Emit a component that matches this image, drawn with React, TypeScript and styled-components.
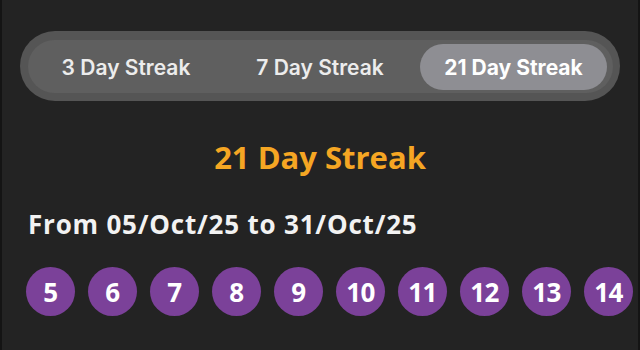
import { useState } from "react";
import styled, { createGlobalStyle } from "styled-components";

const GlobalStyle = createGlobalStyle`
  html, body {
    margin: 0;
    padding: 0;
    background: #232323;
  }
  body {
    font-family: "Open Sans", "Noto Sans", sans-serif;
  }
`;

const streaks = [3, 7, 21];
const days = [5, 6, 7, 8, 9, 10, 11, 12, 13, 14];

const App = () => {
  const [selected, setSelected] = useState(21);

  return (
    <>
      <GlobalStyle />
      <Page>
        <SegmentOuter>
          <SegmentTrack>
            {streaks.map((s) => (
              <Segment key={s} $active={s === selected} onClick={() => setSelected(s)}>
                {s} Day Streak
              </Segment>
            ))}
          </SegmentTrack>
        </SegmentOuter>

        <Title>{selected} Day Streak</Title>
        <Range>From 05/Oct/25 to 31/Oct/25</Range>

        <DayRow>
          {days.map((d) => (
            <DayBubble key={d}>{d}</DayBubble>
          ))}
        </DayRow>
      </Page>
    </>
  );
};

export default App;

const Page = styled.div`
  width: 640px;
  height: 350px;
  box-sizing: border-box;
  overflow: hidden;
  border-left: 2px solid #141414;
  border-right: 2px solid #141414;
  padding-top: 31px;
  display: flex;
  flex-direction: column;
`;

const SegmentOuter = styled.div`
  margin: 0 18px;
  height: 70px;
  box-sizing: border-box;
  padding: 9px 7px 8px 8px;
  border-radius: 35px;
  background: #555555;
`;

const SegmentTrack = styled.div`
  height: 100%;
  box-sizing: border-box;
  padding: 4px 6px 3px 4px;
  border-radius: 27px;
  background: #5f5f5f;
  display: grid;
  grid-template-columns: 188fr 200fr 187fr;
`;

const Segment = styled.button<{ $active: boolean }>`
  border: none;
  margin: 0;
  padding: 0;
  border-radius: 23px;
  cursor: pointer;
  background: ${(p) => (p.$active ? "#8e8e93" : "transparent")};
  color: ${(p) => (p.$active ? "#ffffff" : "#ececec")};
  font-family: "Inter", "Roboto", sans-serif;
  font-weight: ${(p) => (p.$active ? 700 : 600)};
  font-size: 21px;
  letter-spacing: 0;
`;

const Title = styled.h1`
  margin: 36px 0 0;
  text-align: center;
  color: #f5a623;
  font-family: "Open Sans", sans-serif;
  font-weight: 700;
  font-size: 31px;
  line-height: 40px;
`;

const Range = styled.div`
  margin: 31px 0 0 26px;
  color: #f2f2f2;
  font-family: "Open Sans", sans-serif;
  font-weight: 700;
  font-size: 26px;
  line-height: 32px;
  letter-spacing: 0.8px;
`;

const DayRow = styled.div`
  margin: 27px 0 0 24px;
  display: flex;
  gap: 13px;
`;

const DayBubble = styled.div`
  flex: 0 0 auto;
  width: 49px;
  height: 49px;
  border-radius: 50%;
  background: #7b4199;
  color: #ffffff;
  display: flex;
  align-items: center;
  justify-content: center;
  font-family: "Open Sans", sans-serif;
  font-weight: 700;
  font-size: 26px;
  letter-spacing: -0.5px;
`;
